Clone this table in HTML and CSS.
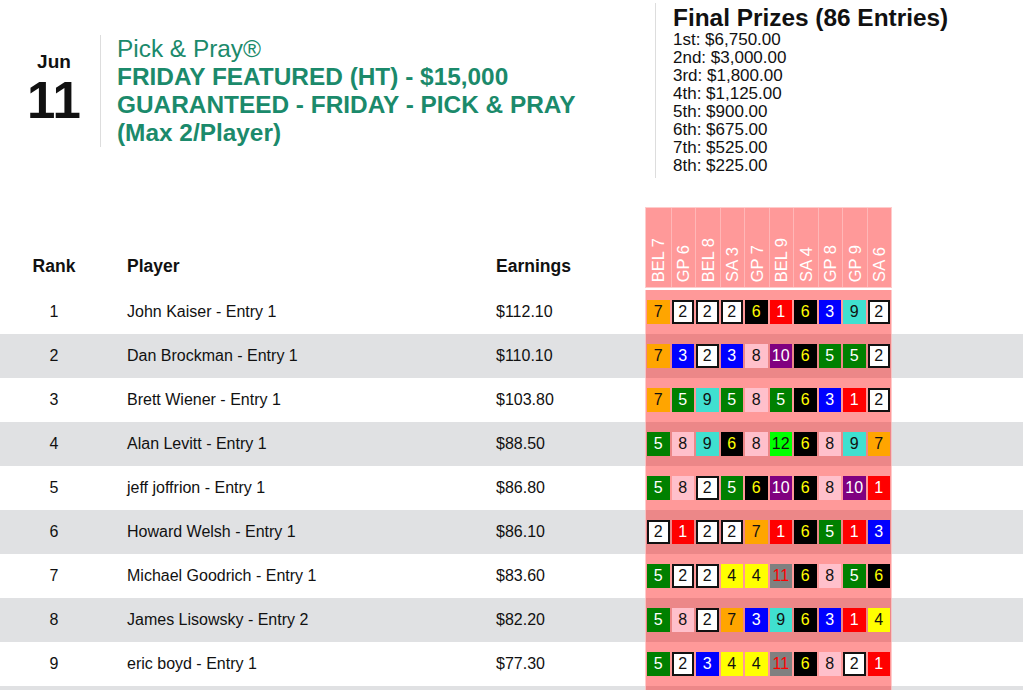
FILE: index.html
```html
<!DOCTYPE html>
<html>
<head>
<meta charset="utf-8">
<link rel="stylesheet" href="styles.css">
</head>
<body>
<header class="top">
  <div class="event">
    <div class="date">
      <div class="date-mon">Jun</div>
      <div class="date-day">11</div>
    </div>
    <div class="title">
      <div class="title-brand">Pick &amp; Pray®</div>
      <div>FRIDAY FEATURED (HT) - $15,000</div>
      <div>GUARANTEED - FRIDAY - PICK &amp; PRAY</div>
      <div>(Max 2/Player)</div>
    </div>
  </div>
  <div class="prizes">
    <h2 class="prizes-title">Final Prizes (86 Entries)</h2>
    <div class="prize-list">
      <div>1st: $6,750.00</div>
      <div>2nd: $3,000.00</div>
      <div>3rd: $1,800.00</div>
      <div>4th: $1,125.00</div>
      <div>5th: $900.00</div>
      <div>6th: $675.00</div>
      <div>7th: $525.00</div>
      <div>8th: $225.00</div>
    </div>
  </div>
</header>

<section class="board">
  <div class="row head">
    <div class="hcell rank">Rank</div>
    <div class="hcell player">Player</div>
    <div class="hcell earn">Earnings</div>
    <div class="races-head">
      <div class="race"><span>BEL 7</span></div>
      <div class="race"><span>GP 6</span></div>
      <div class="race"><span>BEL 8</span></div>
      <div class="race"><span>SA 3</span></div>
      <div class="race"><span>GP 7</span></div>
      <div class="race"><span>BEL 9</span></div>
      <div class="race"><span>SA 4</span></div>
      <div class="race"><span>GP 8</span></div>
      <div class="race"><span>GP 9</span></div>
      <div class="race"><span>SA 6</span></div>
    </div>
    <div></div>
  </div>

  <div class="row">
    <div class="rank">1</div><div class="player">John Kaiser - Entry 1</div><div class="earn">$112.10</div>
    <div class="picks"><div class="c n7">7</div><div class="c n2">2</div><div class="c n2">2</div><div class="c n2">2</div><div class="c n6">6</div><div class="c n1">1</div><div class="c n6">6</div><div class="c n3">3</div><div class="c n9">9</div><div class="c n2">2</div></div><div></div>
  </div>
  <div class="row alt">
    <div class="rank">2</div><div class="player">Dan Brockman - Entry 1</div><div class="earn">$110.10</div>
    <div class="picks"><div class="c n7">7</div><div class="c n3">3</div><div class="c n2">2</div><div class="c n3">3</div><div class="c n8">8</div><div class="c n10">10</div><div class="c n6">6</div><div class="c n5">5</div><div class="c n5">5</div><div class="c n2">2</div></div><div></div>
  </div>
  <div class="row">
    <div class="rank">3</div><div class="player">Brett Wiener - Entry 1</div><div class="earn">$103.80</div>
    <div class="picks"><div class="c n7">7</div><div class="c n5">5</div><div class="c n9">9</div><div class="c n5">5</div><div class="c n8">8</div><div class="c n5">5</div><div class="c n6">6</div><div class="c n3">3</div><div class="c n1">1</div><div class="c n2">2</div></div><div></div>
  </div>
  <div class="row alt">
    <div class="rank">4</div><div class="player">Alan Levitt - Entry 1</div><div class="earn">$88.50</div>
    <div class="picks"><div class="c n5">5</div><div class="c n8">8</div><div class="c n9">9</div><div class="c n6">6</div><div class="c n8">8</div><div class="c n12">12</div><div class="c n6">6</div><div class="c n8">8</div><div class="c n9">9</div><div class="c n7">7</div></div><div></div>
  </div>
  <div class="row">
    <div class="rank">5</div><div class="player">jeff joffrion - Entry 1</div><div class="earn">$86.80</div>
    <div class="picks"><div class="c n5">5</div><div class="c n8">8</div><div class="c n2">2</div><div class="c n5">5</div><div class="c n6">6</div><div class="c n10">10</div><div class="c n6">6</div><div class="c n8">8</div><div class="c n10">10</div><div class="c n1">1</div></div><div></div>
  </div>
  <div class="row alt">
    <div class="rank">6</div><div class="player">Howard Welsh - Entry 1</div><div class="earn">$86.10</div>
    <div class="picks"><div class="c n2">2</div><div class="c n1">1</div><div class="c n2">2</div><div class="c n2">2</div><div class="c n7">7</div><div class="c n1">1</div><div class="c n6">6</div><div class="c n5">5</div><div class="c n1">1</div><div class="c n3">3</div></div><div></div>
  </div>
  <div class="row">
    <div class="rank">7</div><div class="player">Michael Goodrich - Entry 1</div><div class="earn">$83.60</div>
    <div class="picks"><div class="c n5">5</div><div class="c n2">2</div><div class="c n2">2</div><div class="c n4">4</div><div class="c n4">4</div><div class="c n11">11</div><div class="c n6">6</div><div class="c n8">8</div><div class="c n5">5</div><div class="c n6">6</div></div><div></div>
  </div>
  <div class="row alt">
    <div class="rank">8</div><div class="player">James Lisowsky - Entry 2</div><div class="earn">$82.20</div>
    <div class="picks"><div class="c n5">5</div><div class="c n8">8</div><div class="c n2">2</div><div class="c n7">7</div><div class="c n3">3</div><div class="c n9">9</div><div class="c n6">6</div><div class="c n3">3</div><div class="c n1">1</div><div class="c n4">4</div></div><div></div>
  </div>
  <div class="row">
    <div class="rank">9</div><div class="player">eric boyd - Entry 1</div><div class="earn">$77.30</div>
    <div class="picks"><div class="c n5">5</div><div class="c n2">2</div><div class="c n3">3</div><div class="c n4">4</div><div class="c n4">4</div><div class="c n11">11</div><div class="c n6">6</div><div class="c n8">8</div><div class="c n2">2</div><div class="c n1">1</div></div><div></div>
  </div>
  <div class="row alt">
    <div class="rank"></div><div class="player"></div><div class="earn"></div>
    <div class="picks"></div><div></div>
  </div>
</section>
</body>
</html>
```

FILE: styles.css
```css
body {
  margin: 0;
  font-family: "Liberation Sans", Arial, sans-serif;
  color: #111;
  background: #fff;
}

.top {
  display: flex;
  align-items: center;
  padding-top: 3px;
}

.event {
  flex: 0 0 655px;
  display: flex;
  align-items: center;
}

.date {
  width: 92px;
  padding-left: 8px;
  text-align: center;
  font-weight: bold;
}

.date-mon {
  font-size: 19px;
  line-height: 20px;
}

.date-day {
  font-size: 51px;
  line-height: 58px;
}

.title {
  border-left: 1px solid #ddd;
  padding-left: 16px;
  color: #1b8a6b;
  font-size: 24.4px;
  line-height: 28px;
  font-weight: bold;
}

.title-brand {
  font-weight: normal;
}

.prizes {
  border-left: 1px solid #ddd;
  padding: 1px 0 3px 17px;
}

.prizes-title {
  margin: 0;
  font-size: 24.4px;
  line-height: 27px;
  font-weight: bold;
}

.prize-list {
  font-size: 17px;
  line-height: 18px;
}

.board {
  margin-top: 29px;
}

.row {
  display: grid;
  grid-template-columns: 108px 388px 149px 247px 1fr;
  height: 44px;
  align-items: center;
  font-size: 16px;
  line-height: 20px;
}

.row.alt {
  background: #e0e1e3;
}

.row.head {
  height: 81px;
  margin-bottom: 2px;
}

.hcell {
  align-self: end;
  padding-bottom: 12px;
  font-weight: bold;
  font-size: 17.5px;
}

.rank {
  text-align: center;
}

.player {
  padding-left: 19px;
}

.races-head {
  align-self: stretch;
  display: grid;
  grid-template-columns: repeat(10, 1fr);
  background: rgba(255, 0, 0, 0.4);
  border: 1px solid rgba(255, 255, 255, 0.5);
}

.race {
  display: flex;
  align-items: flex-end;
  justify-content: center;
  padding-bottom: 5px;
  border-left: 1px solid rgba(255, 255, 255, 0.3);
}

.race:first-child {
  border-left: none;
}

.race span {
  writing-mode: vertical-rl;
  transform: rotate(180deg);
  color: #fff;
  font-size: 16.5px;
  line-height: 18px;
  white-space: nowrap;
}

.picks {
  align-self: stretch;
  display: grid;
  grid-template-columns: repeat(10, 1fr);
  align-items: center;
  justify-items: center;
  background: rgba(255, 0, 0, 0.4);
  border-left: 1px solid rgba(255, 255, 255, 0.5);
  border-right: 1px solid rgba(255, 255, 255, 0.5);
}

.c {
  width: 22.5px;
  height: 24px;
  box-sizing: border-box;
  display: flex;
  align-items: center;
  justify-content: center;
  font-size: 16px;
}

.n1 { background: #ff0000; color: #fff; }
.n2 { background: #fff; color: #111; border: 2px solid #111; }
.n3 { background: #0000ff; color: #fff; }
.n4 { background: #ffff00; color: #111; }
.n5 { background: #008000; color: #fff; }
.n6 { background: #000; color: #ffff00; }
.n7 { background: #ffa500; color: #111; }
.n8 { background: #ffc0cb; color: #111; }
.n9 { background: #40e0d0; color: #111; }
.n10 { background: #800080; color: #fff; }
.n11 { background: #808080; color: #ff0000; }
.n12 { background: #00ff00; color: #111; }
```
